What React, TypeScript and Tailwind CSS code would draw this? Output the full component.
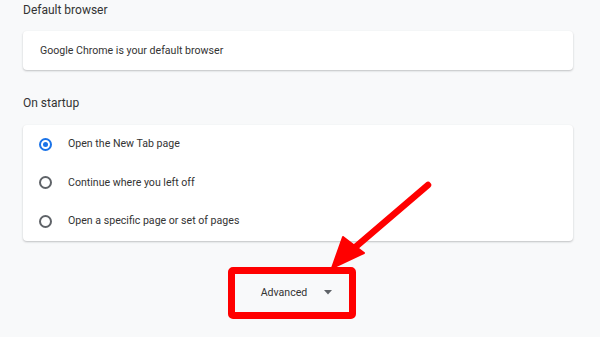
import React from 'react';

const OPTIONS = [
  'Open the New Tab page',
  'Continue where you left off',
  'Open a specific page or set of pages',
];

function Radio({ checked }: { checked: boolean }) {
  return checked ? (
    <span className="w-[13px] h-[13px] rounded-full border-2 border-[#1a73e8] flex items-center justify-center">
      <span className="w-[5px] h-[5px] rounded-full bg-[#1a73e8]" />
    </span>
  ) : (
    <span className="w-[13px] h-[13px] rounded-full border-2 border-[#5f6368]" />
  );
}

export default function App() {
  return (
    <div
      className="relative w-[600px] h-[337px] overflow-hidden bg-[#f8f9fa] text-[#202124]"
      style={{ fontFamily: 'Roboto, "Liberation Sans", sans-serif' }}
    >
      <div className="pl-[23px] w-[573px]">
        {/* Default browser */}
        <div className="h-[31px] pt-[2px] text-[12px] leading-[16px] text-[#333]">Default browser</div>
        <div className="h-[39px] bg-white rounded-[4px] shadow-[0_1px_2px_rgba(60,64,67,0.3)] flex items-center pl-[17px] text-[10.6px] text-[#333]">
          Google Chrome is your default browser
        </div>

        {/* On startup */}
        <div className="h-[55px] pt-[25px] text-[12px] leading-[16px] text-[#333]">On startup</div>
        <div className="bg-white rounded-[4px] shadow-[0_1px_2px_rgba(60,64,67,0.3)]">
          {OPTIONS.map((opt, i) => (
            <div key={opt} className="h-[38.5px] flex items-center pl-[16px]">
              <Radio checked={i === 0} />
              <span className="ml-[16px] text-[10.6px] text-[#333]">{opt}</span>
            </div>
          ))}
        </div>

        {/* Advanced */}
        <div className="mt-[26px] ml-[205px] w-[128px] h-[52px] border-[7px] border-[#ff0000] rounded-[5px] flex items-center justify-center">
          <span className="text-[10.6px] text-[#333] ml-[9px]">Advanced</span>
          <svg className="ml-[17px]" width="8" height="5" viewBox="0 0 8 5">
            <path d="M0 0h8L4 4.5z" fill="#5f6368" />
          </svg>
        </div>
      </div>

      {/* annotation arrow */}
      <svg className="absolute inset-0 pointer-events-none" width="600" height="337" viewBox="0 0 600 337">
        <line x1="428" y1="185" x2="345" y2="256" stroke="#ff0000" strokeWidth="6.5" strokeLinecap="round" />
        <path d="M332 268 L343 237 L364 253 Z" fill="#ff0000" stroke="#ff0000" strokeWidth="2" strokeLinejoin="round" />
      </svg>
    </div>
  );
}
